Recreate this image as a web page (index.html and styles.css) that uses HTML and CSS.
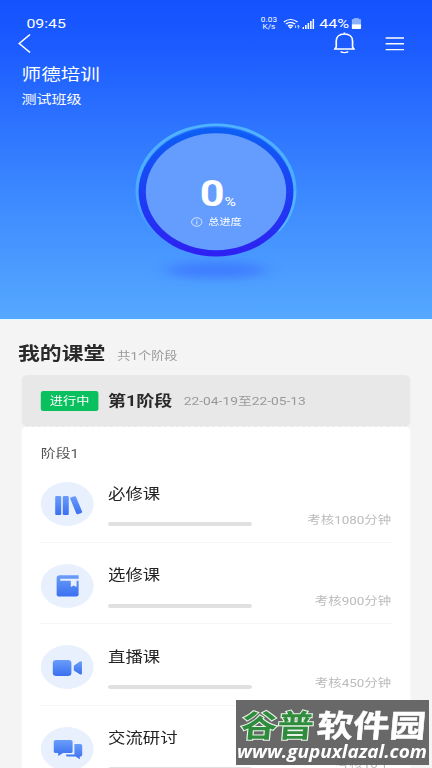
FILE: index.html
```html
<!DOCTYPE html>
<html lang="zh-CN">
<head>
<meta charset="utf-8">
<title>师德培训</title>
<link rel="stylesheet" href="styles.css">
</head>
<body>
<svg class="defs" width="0" height="0"><defs>
  <linearGradient id="ico" x1="0" y1="0" x2="0" y2="1"><stop offset="0" stop-color="#6a9dfa"/><stop offset="1" stop-color="#3b6ff0"/></linearGradient>
</defs></svg>
<div class="screen">
  <header class="hero">
    <div class="status">
      <span class="time">09:45</span>
      <span class="speed">0.03<br>K/s</span>
      <svg class="wifi" width="14" height="12" viewBox="0 0 14 12" fill="none" stroke="#fff" stroke-width="1.1"><path d="M.5 4Q6-1 12 4M2.300 6Q6 2.700 10 6M4 8Q6 6.200 8.300 8"/><path d="M5.200 9h1.800l-.9 1z" fill="#fff"/><path d="M12.600 10.500V7.500M11.600 8.500l1-1.200 1 1.200M10.200 7.500v2.500" stroke-width=".7"/></svg>
      <svg class="signal" width="10" height="11" viewBox="0 0 10 11" fill="#fff"><path d="M0 9h1.300v2H0zM2.200 7h1.300v4H2.200zM4.300 5h1.300v6H4.300zM6.400 3h1.300v8H6.400zM8.500 1h1.300v10H8.500z"/></svg>
      <span class="pct">44%</span>
      <svg class="battery" width="8" height="12" viewBox="0 0 8 12"><path d="M2 0h4v1h1q1 0 1 1v4.500H0V2q0-1 1-1h1z" fill="#8bb0ff"/><path d="M0 6.300h8V10q0 1-1 1H1q-1 0-1-1z" fill="#fff"/></svg>
    </div>
    <nav class="nav">
      <svg width="11" height="20" viewBox="0 0 11 20" fill="none" stroke="#fff" stroke-width="1.300"><path d="M10 .5L1 9.500l9 9"/></svg>
      <svg class="bell" width="18" height="22" viewBox="0 0 18 22" fill="none" stroke="#fff" stroke-width="1.400"><path d="M9 2C4.600 2 2.200 5 2.200 9v6L1 17h16l-1.200-2V9C15.800 5 13.400 2 9 2zM9 .5V2M5.800 19.600Q9 21.600 12.200 19.600"/></svg>
      <svg width="16" height="15" viewBox="0 0 16 15" stroke="#fff" stroke-width="1.400"><path d="M.3 1h15.400M.3 6.800h15.400M.3 12.600h15.400"/></svg>
    </nav>
    <h1>师德培训</h1>
    <p class="class-name">测试班级</p>
    <div class="gauge">
      <svg class="ring" width="140" height="168" viewBox="0 0 140 168">
        <defs>
          <linearGradient id="ring" x1="0" y1="0" x2="0" y2="1"><stop offset="0" stop-color="#0c60f5"/><stop offset="1" stop-color="#2e20f2"/></linearGradient>
          <linearGradient id="edge" x1="0" y1="0" x2="0" y2="1"><stop offset="0" stop-color="#4fb4ff"/><stop offset=".6" stop-color="#48a8ff"/><stop offset=".85" stop-color="#48a8ff" stop-opacity="0"/></linearGradient>
          <filter id="soft" x="-40%" y="-120%" width="180%" height="340%"><feGaussianBlur stdDeviation="7 5"/></filter>
        </defs>
        <ellipse cx="70" cy="149" rx="42" ry="8" fill="#3a70ff" opacity=".7" filter="url(#soft)"/>
        <circle cx="70" cy="69.500" r="65.700" fill="none" stroke="url(#edge)" stroke-width="2.800"/>
        <path d="M122.300 110A65.700 65.700 0 0 0 135.700 70" fill="none" stroke="#52b5ff" stroke-width="2"/>
        <circle cx="70" cy="71" r="64.500" fill="url(#ring)"/>
        <circle cx="70" cy="70.700" r="58.500" fill="#659dff"/>
      </svg>
      <div class="gauge-text">
        <div class="value">0<small>%</small></div>
        <div class="total"><svg width="10" height="10" viewBox="0 0 10 10" fill="none" stroke="#e5efff" stroke-width=".8"><circle cx="5" cy="5" r="4.300"/><path d="M5 4.300V7.500M5 2.500v1"/></svg>总进度</div>
      </div>
    </div>
  </header>
  <main>
    <div class="heading"><h2>我的课堂</h2><span>共1个阶段</span></div>
    <div class="stage"><span class="tag">进行中</span><h3>第1阶段</h3><span class="date">22-04-19至22-05-13</span></div>
    <section class="card">
      <div class="card-title">阶段1</div>
      <article class="row">
        <div class="icon"><svg width="44" height="44" viewBox="0 0 44 44" fill="url(#ico)"><rect x="12" y="14" width="5" height="19" rx="1"/><rect x="18.300" y="14" width="5" height="19" rx="1"/><path d="M25 15.500l3-1.200q1-.3 1.400.7l5 14.600q.3 1-.7 1.500l-2.700 1.200q-1 .3-1.400-.7L24.400 16.600q-.3-.8.6-1.100z"/></svg></div>
        <div class="info"><h4>必修课</h4><div class="bar"></div></div><span class="goal">考核1080分钟</span>
      </article>
      <article class="row">
        <div class="icon"><svg width="44" height="44" viewBox="0 0 44 44"><path d="M16 11.300h15.500v3H31.500V30.500q0 2-2 2H15.500q-2.300 0-2.300-2.300V14q0-2.700 2.800-2.700z" fill="url(#ico)"/><path d="M17 14.700h15v2.100H17q-1 0-1-1t1-1.100z" fill="#e8f0fe"/><path d="M25 16v7l2.400-1.500 2.400 1.500v-7z" fill="#e8f0fe"/></svg></div>
        <div class="info"><h4>选修课</h4><div class="bar"></div></div><span class="goal">考核900分钟</span>
      </article>
      <article class="row">
        <div class="icon"><svg width="44" height="44" viewBox="0 0 44 44" fill="url(#ico)"><rect x="10" y="15" width="15.500" height="16" rx="3"/><path d="M27.500 20.800l5-4.200q1.800-.9 1.800 1v10.600q0 1.900-1.800 1l-5-3.600z"/></svg></div>
        <div class="info"><h4>直播课</h4><div class="bar"></div></div><span class="goal">考核450分钟</span>
      </article>
      <article class="row">
        <div class="icon"><svg width="44" height="44" viewBox="0 0 44 44" fill="url(#ico)"><path d="M28 17h5q1.500 0 1.500 1.500V28q0 1.500-1.500 1.500h-.5V32.300L29 29.500h-6.500q-1.500 0-1.500-1.500v-.5h7z"/><path d="M12.500 13h12.300q1.700 0 1.700 1.500V24.500q0 1.500-1.700 1.500H18.500L14.500 29v-3h-2q-1.700 0-1.700-1.500V14.500q0-1.500 1.700-1.500z"/></svg></div>
        <div class="info"><h4>交流研讨</h4><div class="bar"></div></div><span class="goal">考核10个</span>
      </article>
    </section>
  </main>
</div>
<div class="watermark">
  <svg width="193" height="65" viewBox="0 0 193 65">
    <g class="brand" transform="translate(0 36.500) skewX(-5)">
      <text x="4" y="0" textLength="73" lengthAdjust="spacingAndGlyphs" class="green">谷普</text>
      <text x="80" y="0" textLength="109" lengthAdjust="spacingAndGlyphs" class="white">软件园</text>
    </g>
    <text x="1" y="58" textLength="190" lengthAdjust="spacingAndGlyphs" class="url">www.gupuxlazal.com</text>
  </svg>
</div>
</body>
</html>
```

FILE: styles.css
```css
* { box-sizing: border-box; margin: 0; padding: 0; }
html, body { width: 432px; height: 768px; overflow: hidden; background: #f4f4f4; }
body { position: relative; font-family: Roboto, "Noto Sans CJK SC", sans-serif; }
.defs { position: absolute; }
svg { display: block; flex: none; }
h1, h2, h3, h4 { font-weight: 400; }

/* 360-unit layout widened to fill the window */
.screen { width: 360px; height: 768px; overflow: hidden; transform: scaleX(1.2); transform-origin: 0 0; }

.hero { height: 320px; color: #fff; background: linear-gradient(#1452ff 0, #1c5cff 50px, #2c72ff 120px, #3d8aff 200px, #55a8ff 319px); border-bottom: 1px solid #e6fbff; }
.status { display: flex; align-items: center; height: 33px; padding: 14px 59.500px 0 22px; }
.time { font-size: 13.200px; line-height: 19px; }
.speed { margin-left: auto; font-size: 6.800px; line-height: 7px; text-align: center; letter-spacing: .1px; }
.wifi { margin-left: 5px; }
.signal { margin-left: 2.500px; }
.pct { margin-left: 3.500px; font-size: 13.500px; line-height: 19px; }
.battery { margin-left: 1.500px; }
.nav { display: flex; align-items: center; height: 22px; padding: 0 23.500px 0 15px; }
.bell { margin-left: auto; margin-right: 25px; margin-top: -2px; }
.hero h1 { margin: 8px 0 0 18px; font-size: 16.300px; line-height: 24px; }
.class-name { margin: 3px 0 0 18px; font-size: 12.500px; line-height: 20px; }
.gauge { width: 140px; height: 168px; margin: 11px auto 0; display: grid; }
.ring, .gauge-text { grid-area: 1 / 1; }
.gauge-text { display: flex; flex-direction: column; align-items: center; padding-top: 52px; }
.value { font: 700 36px/42px Roboto, sans-serif; padding-left: 3px; }
.value small { font: 400 13px Roboto, sans-serif; }
.total { display: flex; align-items: center; gap: 5px; font-size: 9.300px; line-height: 14px; }

.heading { display: flex; align-items: center; height: 55px; padding: 12px 0 0 15px; }
.heading h2 { font-size: 18.200px; font-weight: 700; line-height: 26px; color: #2a2a2a; }
.heading span { margin: 6px 0 0 10px; font-size: 11px; line-height: 16px; color: #999; }
.stage { display: flex; align-items: center; height: 52px; margin: 0 18px; padding-left: 16px; background: #e8e8e8; border-radius: 5px; border-bottom: 1px dashed #f4f4f4; }
.tag { width: 48px; height: 20px; border-radius: 2px; background: #0abf5e; color: #fff; font-size: 11px; line-height: 21px; text-align: center; }
.stage h3 { margin-left: 8px; font-size: 15px; font-weight: 700; line-height: 22px; color: #2a2a2a; }
.date { margin-left: 9.500px; font-size: 11.500px; line-height: 18px; color: #999; }
.card { margin: 0 18px; padding: 0 16px; background: #fff; border-radius: 4px; }
.card-title { height: 34px; padding-top: 17px; font-size: 12.400px; line-height: 20px; color: #555; }
.row { display: flex; height: 81.600px; padding-top: 21px; border-bottom: 1px solid #f5f5f5; }
.icon { width: 44px; height: 44px; border-radius: 50%; background: #e8f0fe; }
.info { width: 120px; margin-left: 12px; }
.row h4 { height: 40px; padding-top: 1.500px; font-size: 14.500px; line-height: 22px; color: #222; }
.bar { height: 4px; border-radius: 2px; background: #e0e0e0; }
.goal { margin: 29.500px 0 0 auto; font-size: 11.200px; line-height: 18px; color: #bbb; white-space: nowrap; }

.watermark { position: absolute; left: 236px; top: 700px; width: 193px; height: 65px; background: rgba(92, 92, 92, .93); }
.brand { font: 700 31px "Noto Sans CJK SC", sans-serif; }
.green { fill: #2f8c3c; stroke: #e8f3e8; stroke-width: 2px; paint-order: stroke; }
.white { fill: #fff; stroke: #fff; stroke-width: .5px; }
.url { font: italic 700 18.500px "Open Sans", sans-serif; fill: #fff; }
```
